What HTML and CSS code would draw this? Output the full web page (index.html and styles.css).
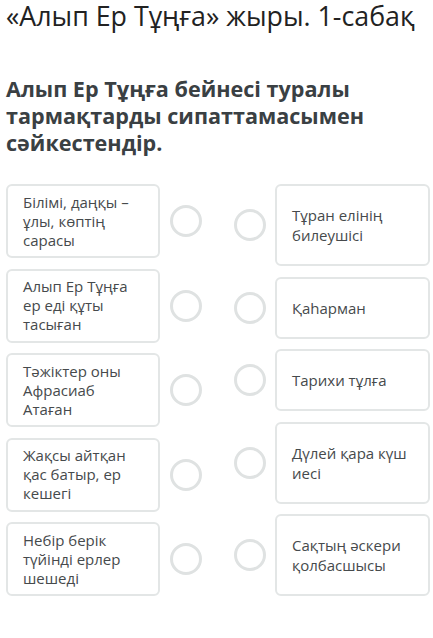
FILE: index.html
```html
<!DOCTYPE html>
<html lang="kk">
<head>
<meta charset="utf-8">
<link rel="stylesheet" href="styles.css">
</head>
<body>
<div class="page">
  <h1 class="title">«Алып Ер Тұңға» жыры. 1-сабақ</h1>
  <h2 class="question">Алып Ер Тұңға бейнесі туралы тармақтарды сипаттамасымен сәйкестендір.</h2>
  <div class="match">
    <div class="col col-left">
      <div class="item"><div class="card">Білімі, даңқы – ұлы, көптің сарасы</div><span class="dot"></span></div>
      <div class="item"><div class="card">Алып Ер Тұңға ер еді құты тасыған</div><span class="dot"></span></div>
      <div class="item"><div class="card">Тәжіктер оны Афрасиаб Атаған</div><span class="dot"></span></div>
      <div class="item"><div class="card">Жақсы айтқан қас батыр, ер кешегі</div><span class="dot"></span></div>
      <div class="item"><div class="card">Небір берік түйінді ерлер шешеді</div><span class="dot"></span></div>
    </div>
    <div class="col col-right">
      <div class="item"><span class="dot"></span><div class="card">Тұран елінің билеушісі</div></div>
      <div class="item"><span class="dot"></span><div class="card">Қаһарман</div></div>
      <div class="item"><span class="dot"></span><div class="card">Тарихи тұлға</div></div>
      <div class="item"><span class="dot"></span><div class="card">Дүлей қара күш иесі</div></div>
      <div class="item"><span class="dot"></span><div class="card">Сақтың әскери қолбасшысы</div></div>
    </div>
  </div>
</div>
</body>
</html>
```

FILE: styles.css
```css
* { box-sizing: border-box; }
html, body { margin: 0; padding: 0; background: #ffffff; }
body { font-family: "Open Sans", "Noto Sans", sans-serif; }
.page { padding: 1px 3px 0 6px; }
.title {
  margin: 0;
  font-size: 26.8px;
  line-height: 29px;
  font-weight: 400;
  color: #222222;
  white-space: nowrap;
}
.question {
  margin: 45px 0 0 0;
  font-size: 21.6px;
  line-height: 27px;
  font-weight: 700;
  color: #3a4043;
  width: 390px;
}
.match {
  margin-top: 28px;
  display: flex;
  gap: 32px;
  align-items: flex-start;
}
.col {
  display: flex;
  flex-direction: column;
  gap: 10.5px;
}
.item {
  display: flex;
  align-items: center;
  gap: 10px;
}
.card {
  border: 2px solid #e3e6e6;
  border-radius: 6px;
  background: #fff;
  color: #464a4c;
  font-size: 15px;
  padding: 0 14px 0 15px;
}
.col-left .card {
  width: 154px;
  height: 74px;
  line-height: 19px;
  padding-top: 6.5px;
  padding-bottom: 6.5px;
}
.col-right .card {
  width: 155px;
  line-height: 20px;
  padding-top: 19px;
  padding-bottom: 19px;
}
.col-right .item { gap: 9px; }
.dot {
  flex: none;
  width: 32px;
  height: 32px;
  border-radius: 50%;
  border: 3px solid #dfe2e2;
  background: #fff;
}
```
